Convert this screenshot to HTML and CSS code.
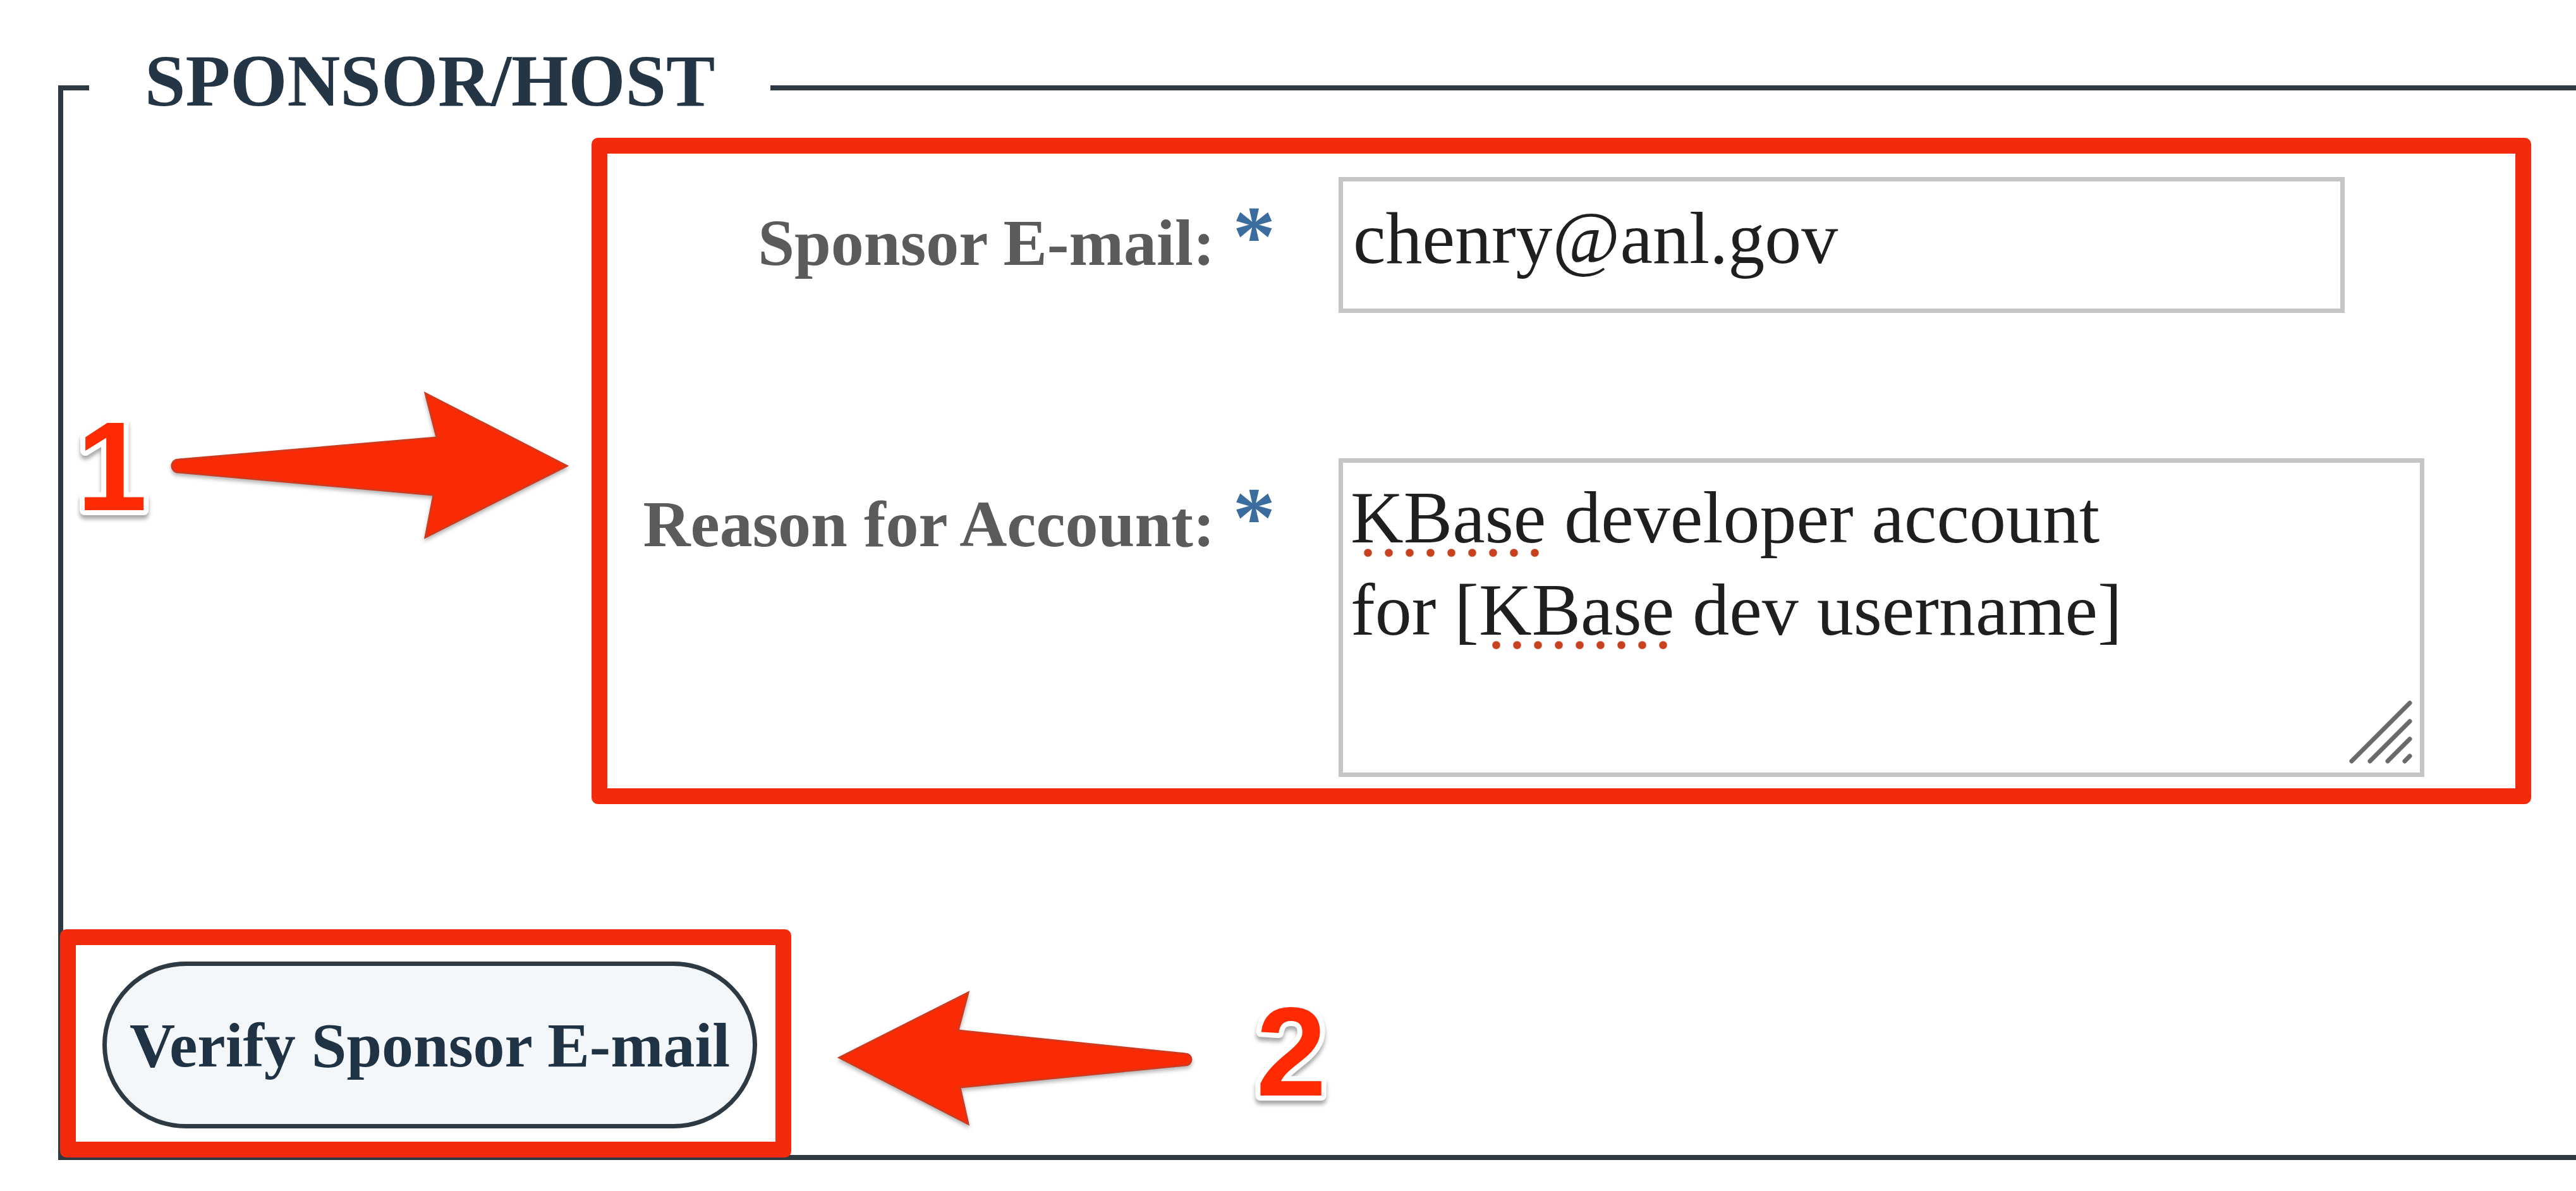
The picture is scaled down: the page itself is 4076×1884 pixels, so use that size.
FILE: index.html
```html
<!DOCTYPE html>
<html lang="en">
<head>
<meta charset="utf-8">
<title>Sponsor/Host</title>
<link rel="stylesheet" href="styles.css">
</head>
<body>
<form class="page">
  <fieldset class="section">
    <legend class="section-title">SPONSOR/HOST</legend>
    <div class="callout callout-fields">
      <div class="form-grid">
        <label class="field-label" for="sponsor-email"><span>Sponsor E-mail:</span><span class="req">*</span></label>
        <input class="text-input" id="sponsor-email" type="email" value="chenry@anl.gov">
        <label class="field-label"><span>Reason for Account:</span><span class="req">*</span></label>
        <div class="text-area" role="textbox" aria-multiline="true">
          <div class="ta-line"><span class="misspelled">KBase</span> developer account</div>
          <div class="ta-line">for [<span class="misspelled">KBase</span> dev username]</div>
          <svg class="grip" viewBox="0 0 100 100" aria-hidden="true">
            <path d="M4 96 L96 4 M33 96 L96 33 M61 96 L96 61 M88 96 L96 88" stroke="#6a6a6a" stroke-width="7" stroke-linecap="round" fill="none"/>
          </svg>
        </div>
      </div>
    </div>
    <div class="callout callout-button">
      <button type="button" class="pill-btn">Verify Sponsor E-mail</button>
    </div>
  </fieldset>
  <svg class="annotations" viewBox="0 0 4076 1884" aria-hidden="true">
    <path class="arrow" d="M282 727 L691 692 L673 622 L897 737 L673 850 L686 783 L282 747 A10 10 0 0 1 282 727 Z"/>
    <path class="arrow" d="M1876 1667 L1516 1630 L1532 1570 L1328 1673 L1532 1778 L1519 1720 L1876 1685 A9 9 0 0 0 1876 1667 Z"/>
    <text class="num" x="177" y="807" text-anchor="middle">1</text>
    <text class="num" x="2043" y="1733" text-anchor="middle">2</text>
  </svg>
</form>
</body>
</html>
```
FILE: styles.css
```css
html, body {
  margin: 0;
  padding: 0;
  background: #ffffff;
  overflow: hidden;
}

body {
  width: 4076px;
  height: 1884px;
  font-family: "Liberation Serif", "Times New Roman", serif;
}

.page {
  position: relative;
  width: 4076px;
  height: 1884px;
  overflow: hidden;
}

.section {
  margin: 70px 0 0 92px;
  padding: 11px 0 0 0;
  border: 8px solid #2d3a44;
  width: 4100px;
  box-sizing: border-box;
  min-width: 0;
}

.section-title {
  margin-left: 41px;
  padding: 0 88px 21px;
  font-size: 116px;
  line-height: 116px;
  font-weight: bold;
  color: #243546;
}

.callout {
  border: 25px solid #f42a0c;
  border-radius: 10px;
  box-sizing: border-box;
}

.callout-fields {
  margin-left: 836px;
  width: 3069px;
  padding: 37px 0 18px;
}

.form-grid {
  display: grid;
  grid-template-columns: 1057px 1718px;
  column-gap: 100px;
  row-gap: 230px;
  align-items: start;
}

.field-label {
  display: flex;
  justify-content: flex-end;
  align-items: baseline;
  padding-top: 34px;
  font-size: 104px;
  line-height: 120px;
  font-weight: bold;
  color: #5b5b5b;
}

.req {
  font-size: 135px;
  line-height: 120px;
  color: #3b6d9f;
  margin-left: 28px;
}

.text-input {
  display: block;
  width: 1592px;
  height: 215px;
  box-sizing: border-box;
  margin: 0;
  border: 7px solid #c4c6c6;
  border-radius: 0;
  padding: 0 16px 20px;
  font-family: "Liberation Serif", "Times New Roman", serif;
  font-size: 116px;
  color: #1f1f1f;
  background: #ffffff;
  outline: none;
}

.text-area {
  position: relative;
  width: 1718px;
  height: 504px;
  box-sizing: border-box;
  border: 7px solid #c4c6c6;
  padding: 14px 12px;
  font-size: 116px;
  line-height: 146px;
  color: #1f1f1f;
  background: #ffffff;
}

.misspelled {
  position: relative;
}

.misspelled::after {
  content: "";
  position: absolute;
  left: 11px;
  right: 0;
  bottom: 1px;
  height: 15px;
  background: radial-gradient(circle 7px at 50% 50%, #c8421f 80%, transparent 100%) 0 0 / 33px 15px repeat-x;
}

.grip {
  position: absolute;
  right: 12px;
  bottom: 14px;
  width: 100px;
  height: 100px;
}

.callout-button {
  margin: 198px 0 -4px -5px;
  width: 1157px;
  padding: 26px 0 21px 42px;
}

.pill-btn {
  display: block;
  width: 1036px;
  height: 264px;
  box-sizing: border-box;
  margin: 0;
  padding: 0;
  border: 7px solid #2d3a43;
  border-radius: 132px;
  background: #f4f7f9;
  font-family: "Liberation Serif", "Times New Roman", serif;
  font-size: 100px;
  font-weight: bold;
  color: #1f3344;
}

.annotations {
  position: absolute;
  left: 0;
  top: 0;
  width: 4076px;
  height: 1884px;
  pointer-events: none;
}

.arrow {
  fill: #fa2a05;
  stroke: #cf3a1e;
  stroke-width: 3;
  filter: drop-shadow(0 4px 3px rgba(0, 0, 0, 0.3));
}

.num {
  font-family: "Liberation Sans", Arial, sans-serif;
  font-weight: bold;
  font-size: 200px;
  fill: #ff2a00;
  stroke: #ffffff;
  stroke-width: 16px;
  stroke-linejoin: round;
  paint-order: stroke;
  filter: drop-shadow(0 6px 3px rgba(0, 0, 0, 0.35));
}
```
